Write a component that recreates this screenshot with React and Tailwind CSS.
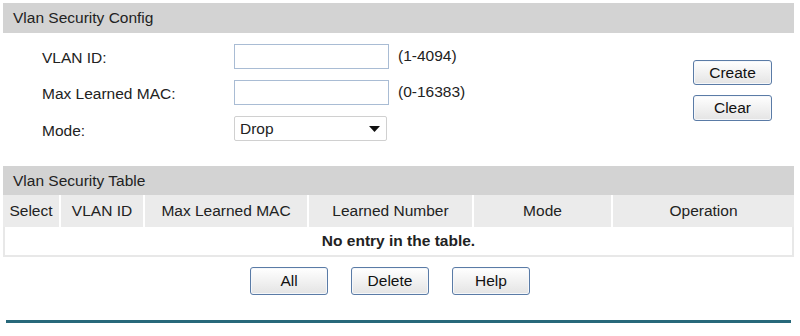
import React from "react";

function Btn({ children, className = "" }) {
  return (
    <button
      className={
        "flex items-center justify-center rounded-[3px] border border-[#5a7ba6] bg-gradient-to-b from-[#ffffff] to-[#e4e4e4] text-[15.5px] text-[#111] shadow-[inset_0_0_0_1px_#f5f7fa] " +
        className
      }
    >
      {children}
    </button>
  );
}

export default function App() {
  const cols = [
    { t: "Select", w: "w-[56px]" },
    { t: "VLAN ID", w: "w-[84px]" },
    { t: "Max Learned MAC", w: "w-[164px]" },
    { t: "Learned Number", w: "w-[165px]" },
    { t: "Mode", w: "w-[139px]" },
    { t: "Operation", w: "w-[183px]" },
  ];
  return (
    <div
      className="w-[800px] h-[336px] bg-white text-[#222] overflow-hidden"
      style={{ fontFamily: '"Liberation Sans", Arial, sans-serif' }}
    >
      <div className="pl-[3px] pr-[6px] pt-[3px] flex flex-col">
        <div className="h-[30px] bg-[#d3d3d3] pl-[10px] flex items-center text-[15.5px]">
          Vlan Security Config
        </div>
        <div className="h-[133px] flex">
          <div className="flex flex-col pt-[11px] gap-[11px]">
            <div className="flex items-center h-[25px] text-[15.5px]">
              <div className="w-[231px] pl-[39px] pt-[3px]">VLAN ID:</div>
              <div className="w-[155px] h-[25px] border border-[#a9bcd4] bg-white"></div>
              <div className="ml-[9px] pb-[2px]">(1-4094)</div>
            </div>
            <div className="flex items-center h-[25px] text-[15.5px]">
              <div className="w-[231px] pl-[39px] pt-[3px]">Max Learned MAC:</div>
              <div className="w-[155px] h-[25px] border border-[#a9bcd4] bg-white"></div>
              <div className="ml-[9px] pb-[1px]">(0-16383)</div>
            </div>
            <div className="flex items-center h-[25px] text-[15.5px]">
              <div className="w-[231px] pl-[39px] pt-[4px]">Mode:</div>
              <div className="w-[153px] h-[25px] border border-[#d0d0d0] rounded-[2px] bg-white flex items-center pl-[5px] pr-[6px] justify-between">
                <span>Drop</span>
                <svg width="11" height="6" viewBox="0 0 11 6">
                  <path d="M0 0 L11 0 L5.5 6 Z" fill="#111" />
                </svg>
              </div>
            </div>
          </div>
          <div className="ml-auto mr-[22px] pt-[27px] flex flex-col gap-[10px]">
            <Btn className="w-[79px] h-[25px] border-[#2f4f7a]">Create</Btn>
            <Btn className="w-[79px] h-[26px]">Clear</Btn>
          </div>
        </div>
        <div className="h-[29px] bg-[#d3d3d3] pl-[10px] flex items-center text-[15.5px]">
          Vlan Security Table
        </div>
        <div className="flex h-[32px] bg-[#ebebeb] text-[15.5px]">
          {cols.map((c, i) => (
            <div
              key={c.t}
              className={
                c.w +
                " flex items-center justify-center " +
                (i > 0 ? "border-l-2 border-white" : "")
              }
            >
              {c.t}
            </div>
          ))}
        </div>
        <div className="h-[30px] border-2 border-t-0 border-[#e8e8e8] flex items-center justify-center text-[15.5px] font-bold">
          No entry in the table.
        </div>
        <div className="flex gap-[23px] pl-[247px] pt-[10px]">
          <Btn className="w-[78px] h-[28px]">All</Btn>
          <Btn className="w-[78px] h-[28px]">Delete</Btn>
          <Btn className="w-[78px] h-[28px]">Help</Btn>
        </div>
        <div className="mt-[25px] ml-[3px] mr-[3px] h-[3px] bg-[#28687a]"></div>
      </div>
    </div>
  );
}
